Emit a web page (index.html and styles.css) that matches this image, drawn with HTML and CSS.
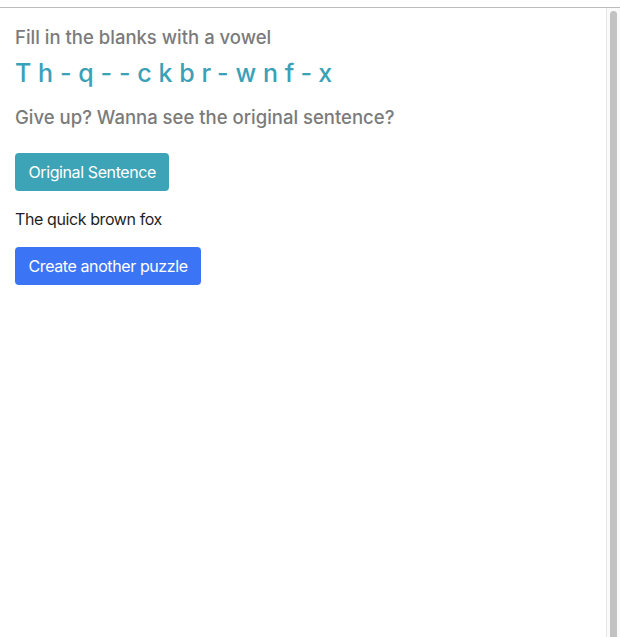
FILE: index.html
```html
<!DOCTYPE html>
<html lang="en">
<head>
<meta charset="utf-8">
<title>Vowel Puzzle</title>
<link rel="stylesheet" href="styles.css">
</head>
<body>
<div class="frame">
  <main class="page">
    <h5 class="prompt">Fill in the blanks with a vowel</h5>
    <h4 class="puzzle">Th-q--ckbr-wnf-x</h4>
    <h5 class="prompt giveup">Give up? Wanna see the original sentence?</h5>
    <button class="btn btn-info" type="button">Original Sentence</button>
    <p class="answer">The quick brown fox</p>
    <button class="btn btn-primary" type="button">Create another puzzle</button>
  </main>
  <div class="scrollbar"><div class="thumb"></div></div>
</div>
</body>
</html>
```
FILE: styles.css
```css
html, body {
  margin: 0;
  padding: 0;
  height: 100%;
  background: #fff;
}
body {
  padding-top: 7px;
  box-sizing: border-box;
  font-family: Inter, "Liberation Sans", sans-serif;
}
.frame {
  border-top: 1px solid #bcbcbc;
  height: 100%;
  display: flex;
  box-sizing: border-box;
}
.page {
  flex: 1;
  padding: 18px 15px 0 15px;
  display: flex;
  flex-direction: column;
  align-items: flex-start;
}
.prompt {
  margin: 0;
  font-size: 18.5px;
  font-weight: 500;
  line-height: 22px;
  color: #7b7b7b;
}
.puzzle {
  margin: 10px 0 0 0;
  font-size: 25px;
  font-weight: 500;
  line-height: 30px;
  letter-spacing: 6.8px;
  color: #3aa1b6;
}
.giveup {
  margin-top: 18px;
}
.btn {
  font-family: inherit;
  font-size: 16px;
  line-height: 24px;
  letter-spacing: -0.4px;
  color: #fff;
  border: 0;
  border-radius: 4px;
  padding: 7px 13.5px;
}
.btn-info {
  margin-top: 25px;
  background: #3da3b7;
}
.btn-primary {
  background: #3c74f6;
}
.answer {
  margin: 18px 0 18px 0;
  font-size: 16px;
  line-height: 20px;
  letter-spacing: -0.4px;
  color: #1f1f1f;
}
.scrollbar {
  width: 13px;
  border-left: 1px solid #e6e6e6;
  background: #fafafa;
  display: flex;
  justify-content: center;
  padding-top: 3px;
}
.thumb {
  width: 7px;
  background: #c2c2c2;
  border-radius: 4px 4px 0 0;
}
```
